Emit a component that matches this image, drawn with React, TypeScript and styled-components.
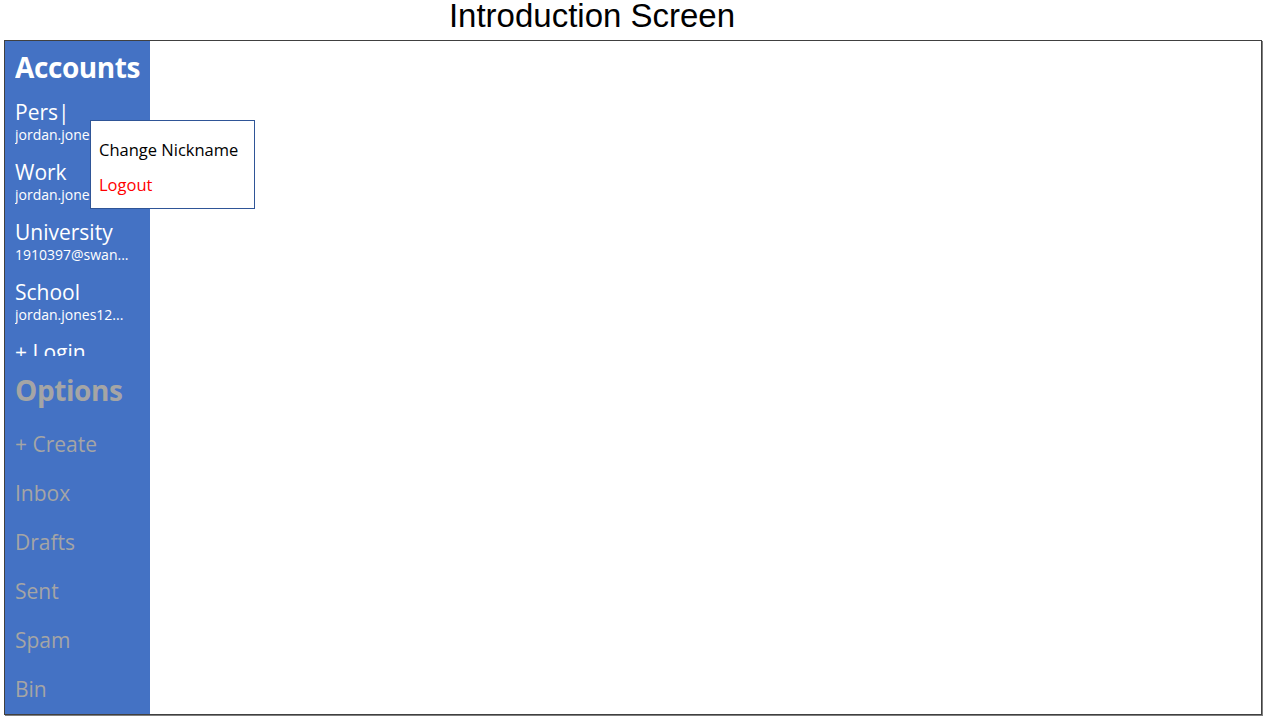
import React from "react";
import styled, { createGlobalStyle } from "styled-components";

const Global = createGlobalStyle`
  html, body { margin: 0; padding: 0; background: #ffffff; }
  body { font-family: "Open Sans", Lato, sans-serif; }
`;

const Page = styled.div`
  width: 1270px;
  height: 719px;
  display: flex;
  flex-direction: column;
  overflow: hidden;
`;

const Title = styled.h1`
  margin: -2px 0 0;
  height: 42px;
  padding-right: 86px;
  box-sizing: border-box;
  text-align: center;
  font-family: "Liberation Sans", Arial, sans-serif;
  font-weight: 400;
  font-size: 33px;
  line-height: 36px;
  color: #000;
`;

const Frame = styled.div`
  margin-left: 4px;
  width: 1256px;
  height: 673px;
  border: 1px solid #404040;
  box-shadow: 1px 1px 0 #7f7f7f;
  display: flex;
  position: relative;
`;

const Sidebar = styled.nav`
  width: 145px;
  background: #4472c4;
  display: flex;
  flex-direction: column;
  padding-left: 10px;
  box-sizing: border-box;
`;

const AccountsArea = styled.div`
  height: 315px;
  flex-shrink: 0;
  overflow: hidden;
  display: flex;
  flex-direction: column;
`;

const Heading = styled.div<{ $muted?: boolean }>`
  flex-shrink: 0;
  font-weight: 700;
  font-size: 28px;
  line-height: 34px;
  color: ${(p) => (p.$muted ? "#a5a5a5" : "#ffffff")};
  letter-spacing: -0.4px;
  margin: ${(p) => (p.$muted ? "17px 0 25px" : "9px 0 15px")};
`;

const Account = styled.div`
  flex-shrink: 0;
  display: flex;
  flex-direction: column;
  height: 60px;
`;

const AccountName = styled.div`
  font-size: 21px;
  line-height: 26px;
  color: #ffffff;
`;

const AccountEmail = styled.div`
  font-size: 14px;
  font-weight: 500;
  line-height: 20px;
  color: #ffffff;
  white-space: nowrap;
`;

const OptionItem = styled.div`
  font-size: 21px;
  line-height: 24px;
  color: #a5a5a5;
`;

const OptionsList = styled.div`
  display: flex;
  flex-direction: column;
  gap: 25px;
`;

const Main = styled.main`
  flex: 1;
  background: #ffffff;
`;

const Popup = styled.div`
  position: absolute;
  left: 85px;
  top: 79px;
  width: 165px;
  height: 89px;
  box-sizing: border-box;
  background: #fff;
  border: 1px solid #2f5597;
  padding: 17px 0 0 8px;
  display: flex;
  flex-direction: column;
  gap: 11px;
`;

const PopupItem = styled.div<{ $danger?: boolean }>`
  font-size: 16.5px;
  line-height: 24px;
  color: ${(p) => (p.$danger ? "#ff0000" : "#000000")};
`;

const accounts = [
  { name: "Pers|", email: "jordan.jones12..." },
  { name: "Work", email: "jordan.jones12..." },
  { name: "University", email: "1910397@swan..." },
  { name: "School", email: "jordan.jones12..." },
  { name: "+ Login", email: "" },
];

const options = ["+ Create", "Inbox", "Drafts", "Sent", "Spam", "Bin"];

export default function App() {
  return (
    <>
      <Global />
      <Page>
        <Title>Introduction Screen</Title>
        <Frame>
          <Sidebar>
            <AccountsArea>
              <Heading>Accounts</Heading>
              {accounts.map((a) => (
                <Account key={a.name}>
                  <AccountName>{a.name}</AccountName>
                  {a.email && <AccountEmail>{a.email}</AccountEmail>}
                </Account>
              ))}
            </AccountsArea>
            <Heading $muted>Options</Heading>
            <OptionsList>
              {options.map((o) => (
                <OptionItem key={o}>{o}</OptionItem>
              ))}
            </OptionsList>
          </Sidebar>
          <Main />
          <Popup>
            <PopupItem>Change Nickname</PopupItem>
            <PopupItem $danger>Logout</PopupItem>
          </Popup>
        </Frame>
      </Page>
    </>
  );
}
